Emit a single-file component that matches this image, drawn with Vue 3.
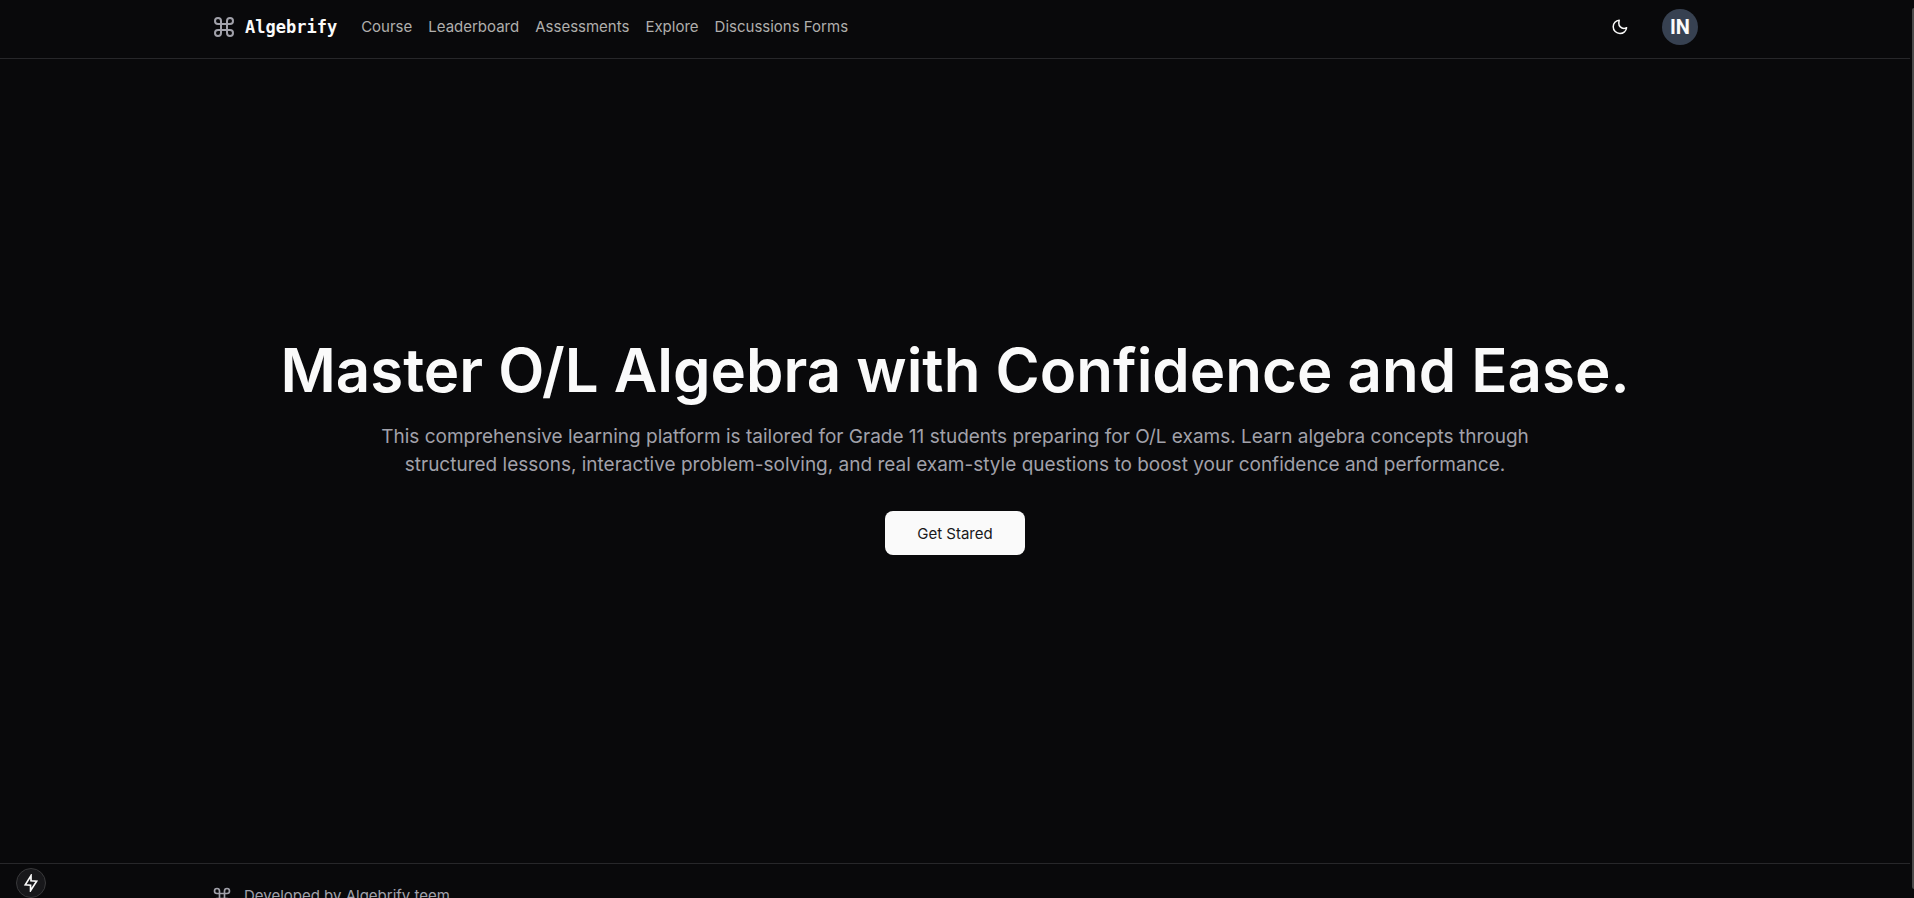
<template>
  <div class="page">
    <header class="site-header">
      <div class="container header-row">
        <a href="#" class="brand">
          <svg class="brand-icon" viewBox="0 0 24 24" aria-hidden="true">
            <path :d="commandPath" />
          </svg>
          <span class="brand-name">Algebrify</span>
        </a>
        <nav class="nav">
          <a v-for="link in links" :key="link" href="#" class="nav-link">{{ link }}</a>
        </nav>
        <div class="actions">
          <button
            type="button"
            class="theme-toggle"
            aria-label="Toggle theme"
          >
            <svg viewBox="0 0 16 16" aria-hidden="true">
              <path d="M7.2 1.2C3.8 1.4 1.2 4.200 1.200 7.800c0 3.800 3 6.700 6.800 6.700 3.400 0 6.200-2.500 6.600-5.800-.8.5-1.700.7-2.600.7-2.900 0-5.200-2.300-5.200-5.200 0-1.100.3-2.200.4-3z" />
            </svg>
          </button>
          <button type="button" class="avatar">IN</button>
        </div>
      </div>
    </header>

    <main class="hero">
      <h1 class="title">Master O/L Algebra with Confidence and Ease.</h1>
      <p class="subtitle">
        This comprehensive learning platform is tailored for Grade 11 students preparing for O/L exams. Learn algebra concepts through
        structured lessons, interactive problem-solving, and real exam-style questions to boost your confidence and performance.
      </p>
      <button type="button" class="cta">Get Stared</button>
    </main>

    <footer class="site-footer">
      <div class="container footer-row">
        <svg class="footer-icon" viewBox="0 0 24 24" aria-hidden="true">
          <path :d="commandPath" />
        </svg>
        <p class="footer-text">Developed by Algebrify teem</p>
      </div>
    </footer>

    <button type="button" class="dev-badge" aria-label="Static route">
      <svg viewBox="0 0 16 16" aria-hidden="true">
        <path d="M8 1.400 2.900 9.600 7.600 10v4.800l5.400-8.400L8 6z" />
      </svg>
    </button>
    <div class="scroll-thumb"></div>
  </div>
</template>

<script setup>
const links = ['Course', 'Leaderboard', 'Assessments', 'Explore', 'Discussions Forms'];

const commandPath =
  'M15 6v12a3 3 0 1 0 3-3H6a3 3 0 1 0 3 3V6a3 3 0 1 0-3 3h12a3 3 0 1 0-3-3';
</script>

<style>
html,
body {
  margin: 0;
  background: #09090b;
}
</style>

<style scoped>
.page {
  box-sizing: border-box;
  height: 100vh;
  padding-right: 4px;
  overflow: hidden;
  background: #09090b;
  color: #fafafa;
  font-family: Inter, sans-serif;
}

.container {
  box-sizing: border-box;
  max-width: 1534px;
  margin: 0 auto;
  padding: 0 24px;
}

.site-header {
  border-bottom: 1px solid #27272a;
}

.header-row {
  display: flex;
  align-items: center;
  height: 58px;
  padding-bottom: 4px;
}

a {
  color: inherit;
  text-decoration: none;
}

button {
  padding: 0;
  border: 0;
  font-family: inherit;
  cursor: pointer;
}

.brand {
  display: flex;
  align-items: center;
  gap: 9px;
  margin-right: 24px;
}

.brand-icon,
.footer-icon {
  flex: none;
  fill: none;
  stroke: #a1a1aa;
  stroke-width: 2;
  stroke-linecap: round;
  stroke-linejoin: round;
}

.brand-icon {
  width: 24px;
  height: 24px;
}

.brand-name {
  font-family: "DejaVu Sans Mono", monospace;
  font-size: 17px;
  font-weight: 700;
  line-height: 24px;
}

.nav {
  display: flex;
  gap: 16px;
}

.nav-link {
  color: #b0afad;
  font-size: 15px;
  line-height: 20px;
}

.actions {
  display: flex;
  align-items: center;
  gap: 24px;
  margin-left: auto;
}

.theme-toggle {
  display: grid;
  place-items: center;
  width: 36px;
  height: 36px;
  background: transparent;
}

.theme-toggle svg {
  width: 16px;
  height: 16px;
  fill: none;
  stroke: #fafafa;
  stroke-width: 1.5;
  stroke-linejoin: round;
}

.avatar {
  width: 36px;
  height: 36px;
  border-radius: 50%;
  background: #374151;
  color: #fafafa;
  font-family: "Liberation Sans Narrow", Roboto, sans-serif;
  font-size: 20px;
  font-weight: 700;
}

.hero {
  box-sizing: border-box;
  display: flex;
  flex-direction: column;
  align-items: center;
  justify-content: center;
  min-height: calc(100vh - 94px);
  padding-bottom: 30px;
  text-align: center;
}

.title {
  margin: 0;
  font-size: 60px;
  font-weight: 600;
  line-height: 66px;
}

.subtitle {
  max-width: 1200px;
  margin: 20px 0 0;
  color: #a1a1aa;
  font-size: 19px;
  line-height: 28px;
}

.cta {
  width: 140px;
  height: 44px;
  margin-top: 32px;
  border-radius: 8px;
  background: #fafafa;
  color: #18181b;
  font-size: 15px;
}

.site-footer {
  border-top: 1px solid #27272a;
}

.footer-row {
  display: flex;
  align-items: center;
  gap: 12px;
  padding-top: 20px;
  padding-bottom: 24px;
}

.footer-icon {
  width: 20px;
  height: 20px;
}

.footer-text {
  margin: 0;
  color: #a1a1aa;
  font-size: 15px;
  line-height: 24px;
}

/* floating controls over the page */
.dev-badge {
  position: fixed;
  bottom: 0;
  left: 16px;
  display: grid;
  place-items: center;
  width: 30px;
  height: 30px;
  border: 1px solid #39393b;
  border-radius: 50%;
  background: #18181b;
}

.dev-badge svg {
  width: 18px;
  height: 18px;
  fill: none;
  stroke: #fafafa;
  stroke-width: 1.5;
}

.scroll-thumb {
  position: fixed;
  top: 8px;
  right: 0;
  bottom: 9px;
  width: 2px;
  border-radius: 2px 0 0 2px;
  background: #4b4b4b;
}
</style>
